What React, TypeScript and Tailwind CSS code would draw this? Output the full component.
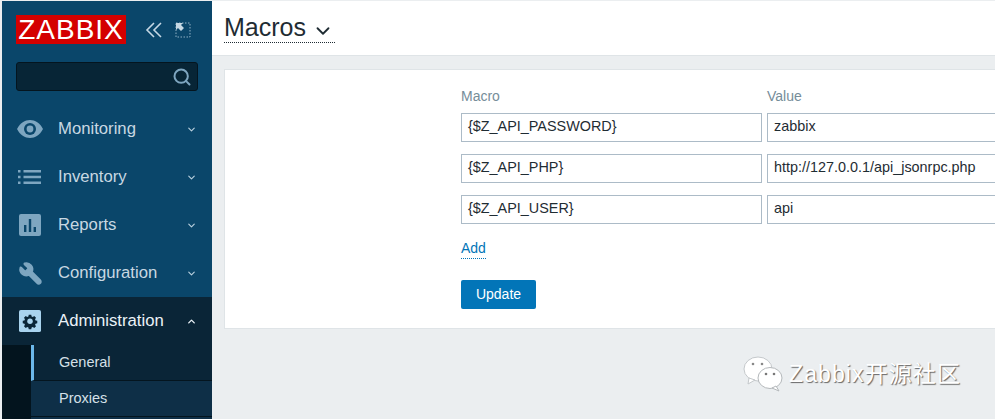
import { ChevronDown, ChevronUp, Search, Wrench } from 'lucide-react';

const MENU = [
  { label: 'Monitoring', icon: 'eye' },
  { label: 'Inventory', icon: 'list' },
  { label: 'Reports', icon: 'reports' },
  { label: 'Configuration', icon: 'wrench' },
];

const MACROS = [
  { macro: '{$Z_API_PASSWORD}', value: 'zabbix' },
  { macro: '{$Z_API_PHP}', value: 'http://127.0.0.1/api_jsonrpc.php' },
  { macro: '{$Z_API_USER}', value: 'api' },
];

function EyeIcon() {
  return (
    <svg width="28" height="20" viewBox="0 0 28 20">
      <path d="M1 10C4 4 9 1 14 1s10 3 13 9c-3 6-8 9-13 9S4 16 1 10z" fill="#7ea6c0" />
      <circle cx="14" cy="10" r="6" fill="#0a466a" />
      <circle cx="14" cy="10" r="3.4" fill="#7ea6c0" />
    </svg>
  );
}

function ListIcon() {
  return (
    <svg width="24" height="14" viewBox="0 0 24 14" fill="#7ea6c0">
      <path d="M0 0h2.5v2.5H0zM5.5 0H23v2.5H5.5zM0 5.7h2.5v2.5H0zM5.5 5.7H23v2.5H5.5zM0 11.4h2.5v2.5H0zM5.5 11.4H23v2.5H5.5z" />
    </svg>
  );
}

function ReportsIcon() {
  return (
    <svg width="22" height="22" viewBox="0 0 22 22">
      <rect width="22" height="22" rx="2" fill="#7ea6c0" />
      <path d="M5 11h2.4v7H5zM9.8 5h2.4v13H9.8zM14.6 13H17v5h-2.4z" fill="#0a466a" />
    </svg>
  );
}

function GearBox() {
  return (
    <svg width="22" height="22" viewBox="0 0 24 24">
      <rect width="24" height="24" rx="2" fill="#a9d3ee" />
      <path
        d="M10.3 3.5h3.4l.5 2.3 1.6.7 2-1.3 2.4 2.4-1.3 2 .7 1.6 2.3.5v3.4l-2.3.5-.7 1.6 1.3 2-2.4 2.4-2-1.3-1.6.7-.5 2.3h-3.4l-.5-2.3-1.6-.7-2 1.3-2.4-2.4 1.3-2-.7-1.6-2.3-.5v-3.4l2.3-.5.7-1.6-1.3-2 2.4-2.4 2 1.3 1.6-.7z"
        transform="translate(2.4 2.4) scale(0.8)"
        fill="#0a2537"
      />
      <circle cx="12" cy="12.4" r="3" fill="#a9d3ee" />
    </svg>
  );
}

function MenuIcon({ name }: { name: string }) {
  if (name === 'eye') return <EyeIcon />;
  if (name === 'list') return <ListIcon />;
  if (name === 'reports') return <ReportsIcon />;
  return <Wrench size={25} fill="#7ea6c0" stroke="#7ea6c0" strokeWidth={1.5} className="-scale-x-100" />;
}

function Input({ value, className }: { value: string; className: string }) {
  return (
    <div className={`h-[29px] border border-[#acbbc7] bg-white pl-[6px] text-[14.4px] leading-[25px] text-[#1f2c33] shrink-0 ${className}`}>
      {value}
    </div>
  );
}

export default function App() {
  return (
    <div className="relative w-[995px] h-[419px] overflow-hidden flex bg-[#ebeef0] pl-[2px] pt-px font-['Liberation_Sans',Arial,sans-serif]">
      {/* Sidebar */}
      <div className="w-[210px] h-full shrink-0 bg-[#0a466a] flex flex-col">
        <div className="flex items-center pl-[14px] pt-[14px] shrink-0">
          <div className="w-[110px] h-[29px] bg-[#d40000] text-white text-[28px] leading-[29px] text-center tracking-[1px]">ZABBIX</div>
          <svg width="18" height="16" viewBox="0 0 18 16" fill="none" stroke="#c5d8e4" strokeWidth="1.6" className="ml-[19px]">
            <path d="M9 1L2 8l7 7M16 1L9 8l7 7" />
          </svg>
          <svg width="16" height="16" viewBox="0 0 16 16" className="ml-[12px]">
            <rect x="1" y="1" width="14" height="14" fill="none" stroke="#8fb0c4" strokeDasharray="1.5 1.5" />
            <path d="M1 1h7L6 3l3 3-3 3-3-3-2 2z" fill="#c5d8e4" />
          </svg>
        </div>
        <div className="mx-[14px] mt-[18px] h-[29px] shrink-0 bg-[#072536] border border-[#04151f] rounded-[3px] flex items-center justify-end pr-[5px]">
          <Search size={20} stroke="#7ea6c0" strokeWidth={2.4} />
        </div>
        <div className="mt-[14px] flex flex-col shrink-0">
          {MENU.map((m) => (
            <div key={m.label} className="h-[48px] flex items-center text-[#c8d8e2] text-[16.7px]">
              <div className="w-[56px] flex justify-center pr-[0px]"><MenuIcon name={m.icon} /></div>
              <span className="flex-1">{m.label}</span>
              <ChevronDown size={11} stroke="#b9d0de" strokeWidth={2.5} className="mr-[15px]" />
            </div>
          ))}
          <div className="h-[48px] flex items-center bg-[#0a2537] text-[#eaf2f7] text-[16.7px]">
            <div className="w-[56px] flex justify-center"><GearBox /></div>
            <span className="flex-1">Administration</span>
            <ChevronUp size={11} stroke="#eaf2f7" strokeWidth={3} className="mr-[15px]" />
          </div>
          <div className="flex bg-[#03141e] h-[80px]">
            <div className="w-[29px] shrink-0" />
            <div className="flex-1 flex flex-col text-[14.5px] text-[#d5e0e7]">
              <div className="h-[36px] shrink-0 bg-[#0a2537] border-l-[3px] border-[#6cb8ea] border-b border-b-[#04151f] pl-[25px] leading-[34px]">General</div>
              <div className="h-[36px] shrink-0 bg-[#0e2f47] border-b border-[#04151f] pl-[28px] leading-[34px]">Proxies</div>
              <div className="flex-1 bg-[#0e2f47]" />
            </div>
          </div>
        </div>
      </div>

      {/* Main */}
      <div className="flex-1 min-w-0 flex flex-col">
        <div className="h-[55px] shrink-0 bg-white border-b border-[#dfe4e7] pl-[12px] pt-[12px]">
          <div className="inline-flex items-center h-[30px] border-b border-dotted border-[#1f2c33] text-[25px] text-[#1f2c33] pr-[1px]">
            Macros
            <ChevronDown size={22} stroke="#1f2c33" strokeWidth={2} className="ml-[6px] mt-[6px]" />
          </div>
        </div>
        <div className="mt-[13px] ml-[12px] h-[260px] bg-white border border-[#dfe4e7] border-r-0 pl-[236px] pt-[18px] overflow-hidden">
          <div className="flex gap-[5px] text-[14px] text-[#768d99] leading-[16px] mb-[9px]">
            <span className="w-[301px]">Macro</span>
            <span>Value</span>
          </div>
          <div className="flex flex-col gap-[12px]">
            {MACROS.map((r) => (
              <div key={r.macro} className="flex gap-[5px]">
                <Input value={r.macro} className="w-[301px]" />
                <Input value={r.value} className="w-[300px]" />
              </div>
            ))}
          </div>
          <div className="mt-[12px]">
            <span className="inline-block text-[14px] leading-[17px] text-[#0275b8] border-b border-dotted border-[#0275b8] pb-[1px]">Add</span>
          </div>
          <div className="mt-[20px] w-[75px] h-[29px] rounded-[2px] bg-[#0275b8] text-white text-[14px] leading-[29px] text-center">Update</div>
        </div>
      </div>

      {/* Watermark */}
      <div className="absolute left-[743px] top-[356px] flex items-center gap-[6px]">
        <svg width="40" height="36" viewBox="0 0 40 36">
          <ellipse cx="15" cy="13" rx="14" ry="12" fill="#fff" stroke="#c4c8cb" />
          <path d="M6 22l-1 6 7-4z" fill="#fff" stroke="#c4c8cb" />
          <ellipse cx="27" cy="22" rx="12" ry="10.5" fill="#fff" stroke="#b4b8bb" />
          <path d="M33 30l3 5-7-3z" fill="#fff" stroke="#b4b8bb" />
          <circle cx="10" cy="8" r="1.3" fill="#888" />
          <circle cx="19" cy="8" r="1.3" fill="#888" />
          <circle cx="23" cy="18" r="1.3" fill="#777" />
          <circle cx="31" cy="18" r="1.3" fill="#777" />
        </svg>
        <span className="text-[23px] leading-[28px] tracking-[1.1px] text-white font-['Liberation_Sans','Noto_Sans_CJK_SC',sans-serif] [text-shadow:1px_1px_1px_#666]">Zabbix开源社区</span>
      </div>
    </div>
  );
}
